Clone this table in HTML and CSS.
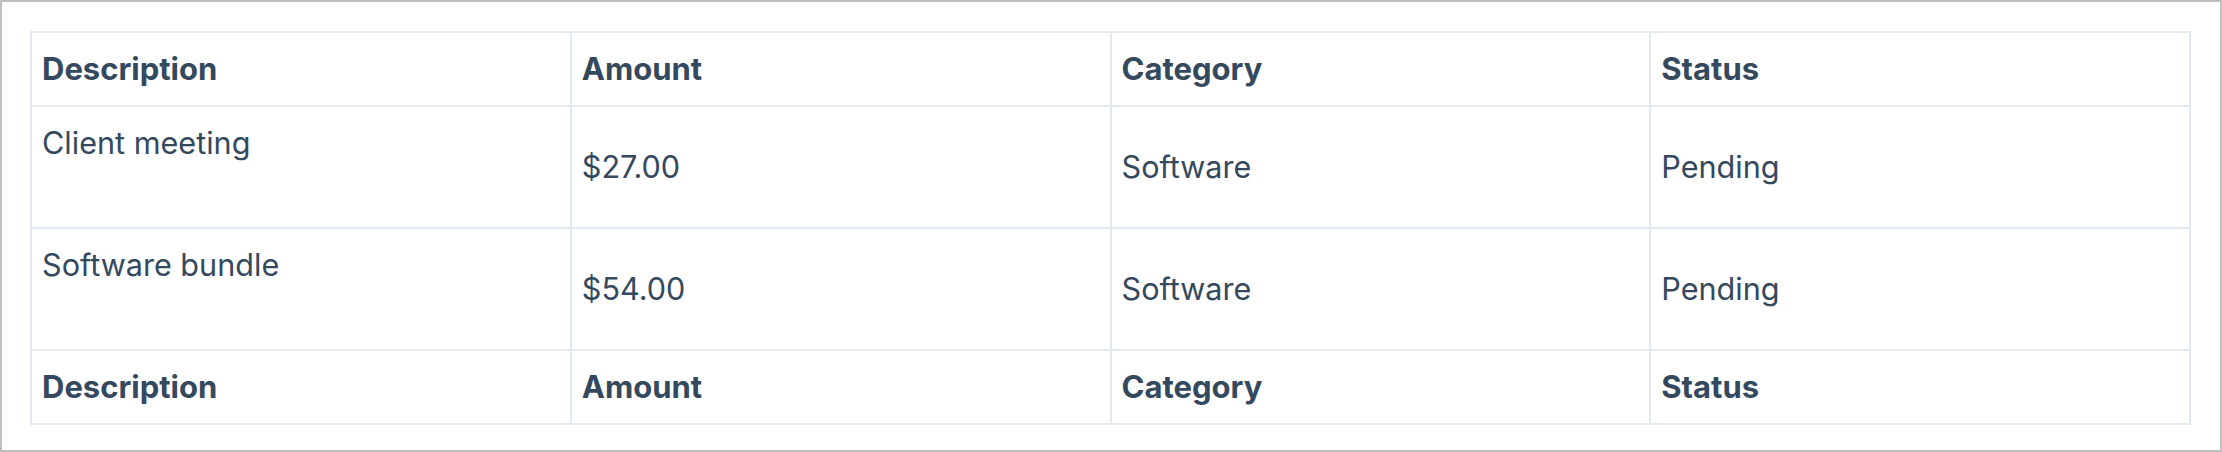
FILE: index.html
```html
<!DOCTYPE html>
<html>
    <head>
        <meta charset="utf-8" />
        <title>Expenses</title>
        <link rel="stylesheet" href="styles.css">
    </head>
    <body>
        <div class="frame">
            <table class="expenses">
                <thead>
                    <tr>
                        <th>Description</th>
                        <th>Amount</th>
                        <th>Category</th>
                        <th>Status</th>
                    </tr>
                </thead>
                <tbody>
                    <tr>
                        <td class="desc">Client meeting</td>
                        <td>$27.00</td>
                        <td>Software</td>
                        <td>Pending</td>
                    </tr>
                    <tr>
                        <td class="desc">Software bundle</td>
                        <td>$54.00</td>
                        <td>Software</td>
                        <td>Pending</td>
                    </tr>
                </tbody>
                <tfoot>
                    <tr>
                        <th>Description</th>
                        <th>Amount</th>
                        <th>Category</th>
                        <th>Status</th>
                    </tr>
                </tfoot>
            </table>
        </div>
    </body>
</html>
```

FILE: styles.css
```css
html, body{
    margin: 0;
    padding: 0;
    background-color: #fff;
}

.frame{
    box-sizing: border-box;
    width: 100%;
    height: 452px;
    padding: 29px 29px 0 28px;
    border: 2px solid #bfbfbf;
    font-family: "Inter", "Noto Sans", sans-serif;
    color: #34495e;
}

.expenses{
    width: 100%;
    border-collapse: collapse;
    table-layout: fixed;
    border: 2px solid #e2e8f0;
    color: #34495e;
}

.expenses th,
.expenses td{
    border: 2px solid #e2e8f0;
    padding: 12px 10px;
    font-size: 31px;
    line-height: 48px;
    text-align: left;
    vertical-align: middle;
}

.expenses th{
    font-weight: 700;
}

.expenses td{
    font-size: 30.6px;
    font-weight: 400;
    height: 96px;
}

.expenses td.desc{
    vertical-align: top;
}
```
